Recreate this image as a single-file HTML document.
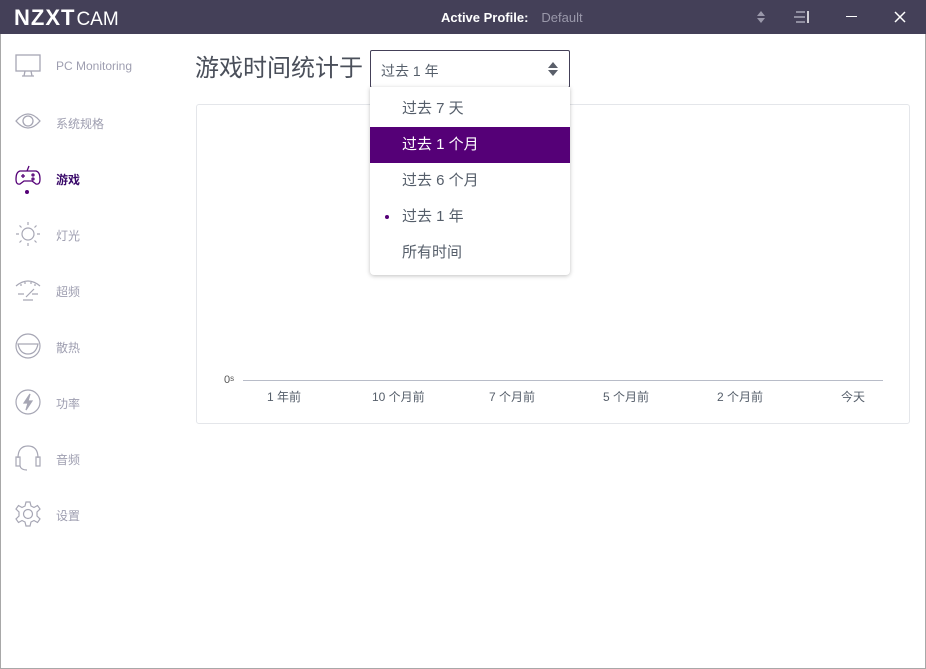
<!DOCTYPE html>
<html><head><meta charset="utf-8"><style>
*{margin:0;padding:0;box-sizing:border-box}
body{width:926px;height:669px;background:#fff;font-family:"Liberation Sans","Noto Sans CJK SC",sans-serif;position:relative;overflow:hidden}
.tb{position:absolute;left:0;top:0;width:926px;height:34px;background:#444058}
.abs{position:absolute}
.nav{position:absolute;left:56px;font-size:12px;color:#9e9eb0}
.ic{position:absolute;left:15px}
.menu div{height:36px;line-height:36px;padding-left:32px;font-size:15px;color:#555e6a}
</style></head><body>
<div class="abs" style="left:0;top:0;width:926px;height:669px;border:1px solid #a8a8a8"></div>
<div class="tb">
<div class="abs" style="left:14px;top:5px;color:#fff;font-weight:bold;font-size:22px;letter-spacing:1px">NZXT<span style="font-weight:normal;font-size:19px;margin-left:1px;letter-spacing:0">CAM</span></div>
<div class="abs" style="left:441px;top:10px;color:#fff;font-weight:bold;font-size:13px">Active Profile:<span style="font-weight:normal;color:#9a98aa;margin-left:13px">Default</span></div>
<svg class="abs" style="left:755px;top:9px" width="12" height="16"><path d="M6 2 L10 7 H2Z M6 14 L10 9 H2Z" fill="#9a98aa"/></svg>
<svg class="abs" style="left:792px;top:10px" width="18" height="14"><path d="M4 2H13M2 7H13M4 12H13" stroke="#aaa8b8" stroke-width="1.5"/><path d="M16 1V13" stroke="#fff" stroke-width="1.5"/></svg>
<div class="abs" style="left:846px;top:16px;width:11px;height:1px;background:#fff"></div>
<svg class="abs" style="left:894px;top:11px" width="12" height="12"><path d="M1 1L11 11M11 1L1 11" stroke="#fff" stroke-width="1.5"/></svg>
</div>

<svg class="ic" style="top:54px" width="26" height="24" fill="none" stroke="#a6a6b4" stroke-width="1.3"><rect x="1" y="1" width="24" height="16"/><path d="M10 17L9 22H17L16 17M7 22H19"/></svg>
<div class="nav" style="top:59px">PC Monitoring</div>
<svg class="ic" style="top:112px" width="26" height="18" fill="none" stroke="#a6a6b4" stroke-width="1.3"><path d="M1 9Q13 -5 25 9Q13 23 1 9Z"/><circle cx="13" cy="9" r="5"/></svg>
<div class="nav" style="top:115px">系统规格</div>
<svg class="ic" style="top:165px" width="26" height="22" fill="none" stroke="#550077" stroke-width="1.3"><path d="M14 1L12 6M5 6H21Q25 7 25 14Q25 20 21 19L17 16H9L5 19Q1 20 1 14Q1 7 5 6Z"/><path d="M6 11H10M8 9V13"/><circle cx="18" cy="10" r="1"/><circle cx="18" cy="14" r="1"/></svg>
<div class="abs" style="left:25px;top:190px;width:4px;height:4px;border-radius:2px;background:#550077"></div>
<div class="nav" style="top:171px;color:#3a0a6a;font-weight:bold">游戏</div>
<svg class="ic" style="top:221px" width="26" height="26" fill="none" stroke="#a6a6b4" stroke-width="1.2"><circle cx="13" cy="13" r="6"/><path d="M13 1V4M13 22V25M1 13H4M22 13H25M4.5 4.5L6.5 6.5M19.5 19.5L21.5 21.5M4.5 21.5L6.5 19.5M19.5 6.5L21.5 4.5"/></svg>
<div class="nav" style="top:227px">灯光</div>
<svg class="ic" style="top:279px" width="26" height="22" fill="none" stroke="#a6a6b4" stroke-width="1.2"><path d="M1 7Q13 -3 25 7M3 15H9M17 15H23M11 18L19 10M8 21H18"/><path d="M6 5V7M10 3V5M16 3V5M20 5V7" /></svg>
<div class="nav" style="top:283px">超频</div>
<svg class="ic" style="top:333px" width="26" height="26" fill="none" stroke="#a6a6b4" stroke-width="1.2"><circle cx="13" cy="13" r="12"/><path d="M3 11H23Q21 21 13 21Q5 21 3 11Z"/></svg>
<div class="nav" style="top:339px">散热</div>
<svg class="ic" style="top:389px" width="26" height="26" fill="none" stroke="#a6a6b4" stroke-width="1.2"><circle cx="13" cy="13" r="12"/><path d="M15 5L9 14H13L11 21L17 12H13Z" fill="#a6a6b4"/></svg>
<div class="nav" style="top:395px">功率</div>
<svg class="ic" style="top:444px" width="26" height="28" fill="none" stroke="#a6a6b4" stroke-width="1.2"><path d="M3 14Q3 2 13 2Q23 2 23 14M5 22Q6 26 12 26"/><rect x="1" y="13" width="4" height="9"/><rect x="21" y="13" width="4" height="9"/></svg>
<div class="nav" style="top:451px">音频</div>
<svg class="ic" style="top:501px" width="26" height="26" fill="none" stroke="#a6a6b4" stroke-width="1.2"><path d="M11 1H15L16 5L19 6.5L22.5 4.5L25 8L22 11V15L25 18L22.5 21.5L19 19.5L16 21L15 25H11L10 21L7 19.5L3.5 21.5L1 18L4 15V11L1 8L3.5 4.5L7 6.5L10 5Z"/><circle cx="13" cy="13" r="4.5"/></svg>
<div class="nav" style="top:507px">设置</div>

<div class="abs" style="left:195px;top:48px;font-size:24px;color:#4a4f5a">游戏时间统计于</div>
<div class="abs" style="left:370px;top:50px;width:200px;height:38px;border:1px solid #444058;border-radius:2px;font-size:14px;color:#555e6a;padding:10px 0 0 10px">过去 1 年
<svg class="abs" style="left:176px;top:10px" width="12" height="16"><path d="M6 1L11 7H1Z M6 15L11 9H1Z" fill="#5a5f6a"/></svg></div>

<div class="abs" style="left:196px;top:104px;width:714px;height:320px;border:1px solid #e4e6ea;border-radius:3px"></div>
<div class="abs" style="left:224px;top:374px;font-size:11px;color:#555">0<span style="font-size:8px;vertical-align:top">s</span></div>
<div class="abs" style="left:243px;top:380px;width:640px;height:1px;background:#b8bcc8"></div>
<div class="abs" style="left:0;top:388px;font-size:12px;color:#555e6a;width:926px">
<span class="abs" style="left:267px">1 年前</span><span class="abs" style="left:372px">10 个月前</span><span class="abs" style="left:489px">7 个月前</span><span class="abs" style="left:603px">5 个月前</span><span class="abs" style="left:717px">2 个月前</span><span class="abs" style="left:841px">今天</span></div>

<div class="abs menu" style="left:370px;top:87px;width:200px;height:188px;background:#fff;border-radius:0 0 4px 4px;box-shadow:0 1px 4px rgba(0,0,0,.25);padding-top:4px">
<div>过去 7 天</div>
<div style="background:#550077;color:#fff">过去 1 个月</div>
<div>过去 6 个月</div>
<div style="position:relative"><span class="abs" style="left:15px;top:16px;width:4px;height:4px;border-radius:2px;background:#550077"></span>过去 1 年</div>
<div>所有时间</div>
</div>
</body></html>
